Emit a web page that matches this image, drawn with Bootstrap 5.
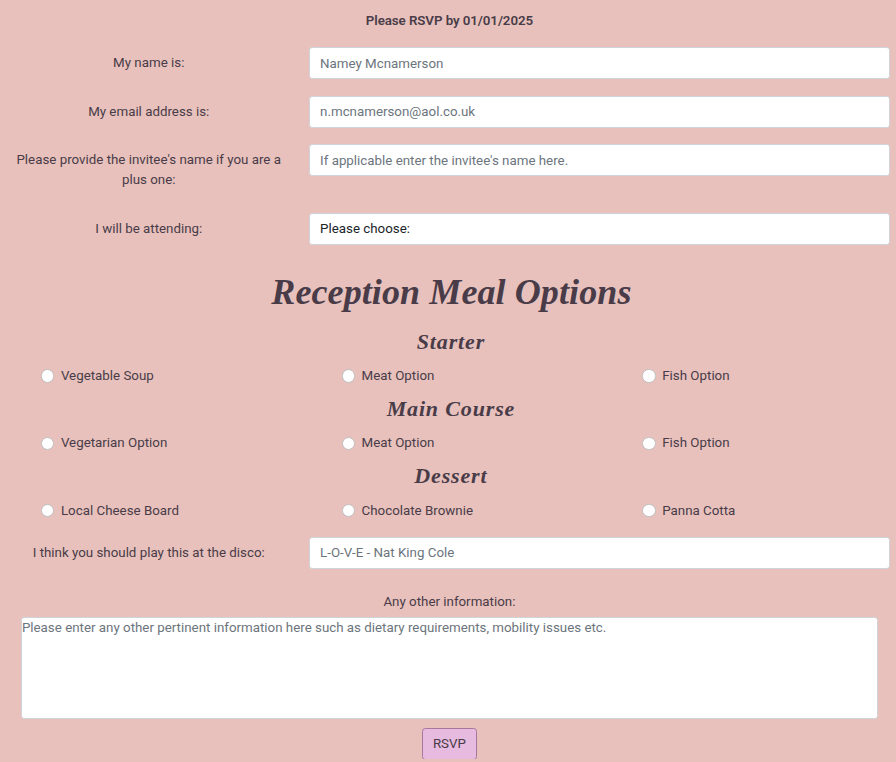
<!DOCTYPE html>
<html lang="en">
<head>
<meta charset="utf-8">
<meta name="viewport" content="width=device-width, initial-scale=1">
<title>RSVP</title>
<link href="https://cdn.jsdelivr.net/npm/bootstrap@5.3.0/dist/css/bootstrap.min.css" rel="stylesheet">
<style>
html { font-size: 13.3333px; overflow: hidden; }
body { font-family: Roboto, sans-serif; background: #e8c1bc; color: #493c48; overflow: hidden; height: 762px; }
.rsvp-form { width: 902px; margin-left: -1.6px; padding-top: 10.6px; }
.rsvp-form .form-control, .rsvp-form .form-select { font-size: 1rem; border: 1px solid #ced4da; border-radius: 3.3px; padding: 5px 10px; background: #fff; color: #212529; height: 32px; }
.rsvp-form .form-control::placeholder { color: #6c757d; opacity: 1; }
.deadline { height: 36.5px; margin: 0; font-weight: 600; letter-spacing: -.08px; }
.field { margin-bottom: 16.67px; }
.field > * { padding-left: 10px; padding-right: 10px; }
.script-title { font-family: "Liberation Serif", serif; font-style: italic; font-weight: 700; margin: 0; color: #493c48; white-space: nowrap; padding-left: 3px; }
.title-main { font-size: 36px; line-height: 40px; letter-spacing: .1px; margin-top: 26.7px; height: 58px; padding-left: 4px; }
.title-sub { font-size: 22px; line-height: 24px; height: 36.4px; letter-spacing: .85px; }
.choices { height: 30.9px; }
.choices-last { height: 36.2px; }
.choice { padding-left: 42.5px; min-height: 0; margin: 0; }
.choice .form-check-input { width: 13.33px; height: 13.33px; margin: 3.4px 0 0; border: 1px solid #bfbfbf; background-color: #fff; float: none; flex: none; }
.choice .form-check-label { margin-left: 6.7px; }
.info-label { padding-top: 7px; padding-bottom: 5px; }
.rsvp-form textarea.form-control { width: 857px; height: 102px; padding: 0; resize: none; }
.submit-row { margin-top: 9px; height: 31px; overflow: hidden; }
.btn-rsvp { font-size: 1rem; background: #e7bbdf; border: 1px solid #a9769f; color: #493c48; border-radius: 3.3px; padding: 5px 10px; height: 32px; line-height: 20px; }
</style>
</head>
<body>
<form class="rsvp-form">
  <p class="deadline text-center">Please RSVP by 01/01/2025</p>
  <div class="row g-0 field">
    <label class="col-4 col-form-label text-center" for="name">My name is:</label>
    <div class="col-8"><input id="name" class="form-control" placeholder="Namey Mcnamerson"></div>
  </div>
  <div class="row g-0 field">
    <label class="col-4 col-form-label text-center" for="email">My email address is:</label>
    <div class="col-8"><input id="email" class="form-control" placeholder="n.mcnamerson@aol.co.uk"></div>
  </div>
  <div class="row g-0 field">
    <label class="col-4 col-form-label text-center" for="plus">Please provide the invitee's name if you are a plus one:</label>
    <div class="col-8"><input id="plus" class="form-control" placeholder="If applicable enter the invitee's name here."></div>
  </div>
  <div class="row g-0 field">
    <label class="col-4 col-form-label text-center" for="attend">I will be attending:</label>
    <div class="col-8"><select id="attend" class="form-select"><option>Please choose:</option></select></div>
  </div>
  <h2 class="script-title title-main text-center">Reception Meal Options</h2>
  <h4 class="script-title title-sub text-center">Starter</h4>
  <div class="row g-0 choices">
    <div class="col-4"><div class="choice d-flex"><input class="form-check-input" type="radio" name="s" id="s1"><label class="form-check-label" for="s1">Vegetable Soup</label></div></div>
    <div class="col-4"><div class="choice d-flex"><input class="form-check-input" type="radio" name="s" id="s2"><label class="form-check-label" for="s2">Meat Option</label></div></div>
    <div class="col-4"><div class="choice d-flex"><input class="form-check-input" type="radio" name="s" id="s3"><label class="form-check-label" for="s3">Fish Option</label></div></div>
  </div>
  <h4 class="script-title title-sub text-center">Main Course</h4>
  <div class="row g-0 choices">
    <div class="col-4"><div class="choice d-flex"><input class="form-check-input" type="radio" name="m" id="m1"><label class="form-check-label" for="m1">Vegetarian Option</label></div></div>
    <div class="col-4"><div class="choice d-flex"><input class="form-check-input" type="radio" name="m" id="m2"><label class="form-check-label" for="m2">Meat Option</label></div></div>
    <div class="col-4"><div class="choice d-flex"><input class="form-check-input" type="radio" name="m" id="m3"><label class="form-check-label" for="m3">Fish Option</label></div></div>
  </div>
  <h4 class="script-title title-sub text-center">Dessert</h4>
  <div class="row g-0 choices choices-last">
    <div class="col-4"><div class="choice d-flex"><input class="form-check-input" type="radio" name="d" id="d1"><label class="form-check-label" for="d1">Local Cheese Board</label></div></div>
    <div class="col-4"><div class="choice d-flex"><input class="form-check-input" type="radio" name="d" id="d2"><label class="form-check-label" for="d2">Chocolate Brownie</label></div></div>
    <div class="col-4"><div class="choice d-flex"><input class="form-check-input" type="radio" name="d" id="d3"><label class="form-check-label" for="d3">Panna Cotta</label></div></div>
  </div>
  <div class="row g-0 field">
    <label class="col-4 col-form-label text-center" for="song">I think you should play this at the disco:</label>
    <div class="col-8"><input id="song" class="form-control" placeholder="L-O-V-E - Nat King Cole"></div>
  </div>
  <label class="info-label d-block text-center" for="info">Any other information:</label>
  <textarea id="info" class="form-control mx-auto" placeholder="Please enter any other pertinent information here such as dietary requirements, mobility issues etc."></textarea>
  <div class="submit-row text-center"><button type="button" class="btn btn-rsvp">RSVP</button></div>
</form>
</body>
</html>
